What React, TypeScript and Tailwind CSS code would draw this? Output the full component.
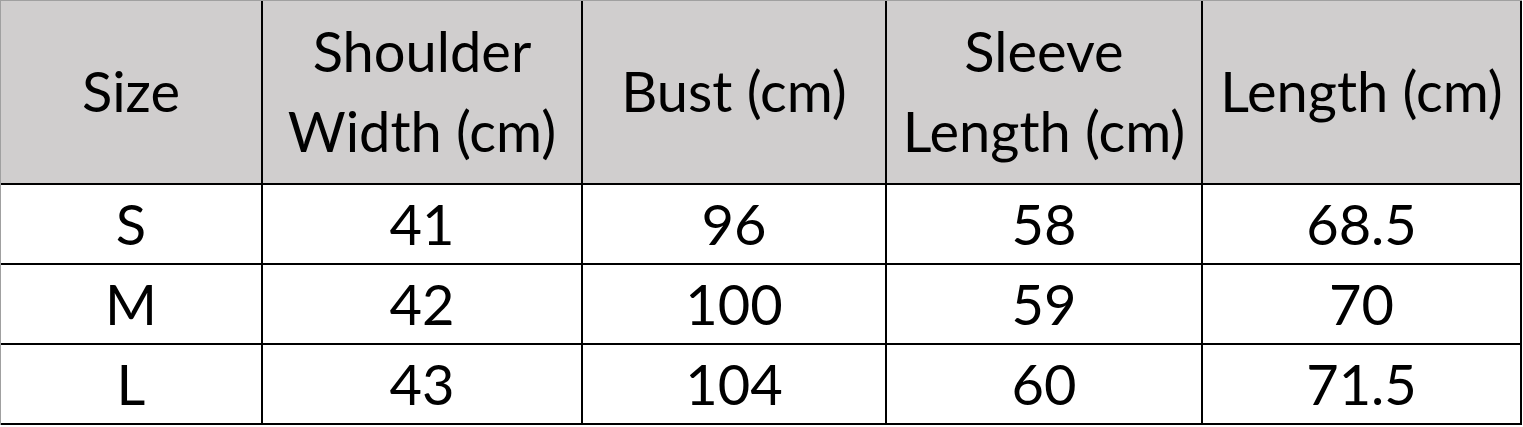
import React from "react";

const cols = ["w-[262px]", "w-[320px]", "w-[304px]", "w-[316px]", "w-[319px]"];

const header: string[][] = [
  ["Size"],
  ["Shoulder", "Width (cm)"],
  ["Bust (cm)"],
  ["Sleeve", "Length (cm)"],
  ["Length (cm)"],
];

const rows = [
  ["S", "41", "96", "58", "68.5"],
  ["M", "42", "100", "59", "70"],
  ["L", "43", "104", "60", "71.5"],
];

export default function App() {
  return (
    <div className="w-[1523px] h-[427px] bg-white overflow-hidden text-black" style={{ fontFamily: "Lato, 'Open Sans', sans-serif" }}>
      <div className="w-[1522px] border-t border-l border-t-[#a0a0a0] border-l-[#a0a0a0]">
        <div className="flex h-[184px] bg-[#d0cece]">
          {header.map((h, i) => (
            <div
              key={i}
              className={`${cols[i]} shrink-0 flex flex-col items-center justify-center border-r-2 border-b-2 border-black text-[56px] leading-[80px] pb-[2px]`}
            >
              {h.map((l, j) => (
                <span key={j} className="whitespace-nowrap">{l}</span>
              ))}
            </div>
          ))}
        </div>
        {rows.map((r, ri) => (
          <div key={ri} className="flex h-[80px]">
            {r.map((c, ci) => (
              <div
                key={ci}
                className={`${cols[ci]} shrink-0 flex items-center justify-center border-r-2 border-b-2 border-black text-[56px] leading-none`}
              >
                {c}
              </div>
            ))}
          </div>
        ))}
      </div>
    </div>
  );
}
